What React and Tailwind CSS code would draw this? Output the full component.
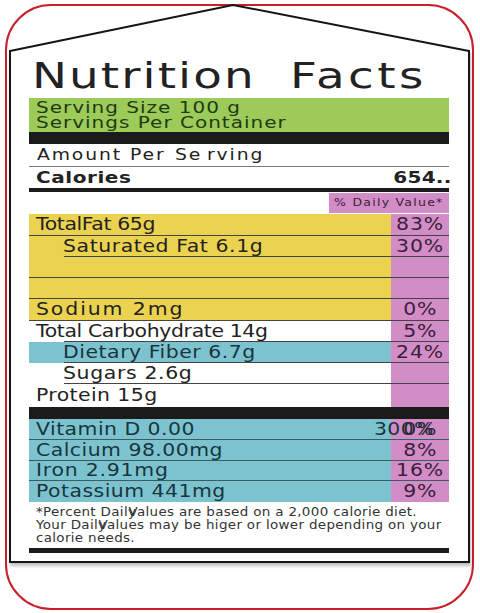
const YELLOW = 'bg-[#ebd250]';
const BLUE = 'bg-[#7dc3cf]';
const WHITE = 'bg-white';
const PINK = 'bg-[#d28cc6]';

const upperRows = [
  { label: 'TotalFat 65g', value: '83%', bg: YELLOW, h: 'h-[22px]', track: 'tracking-[-0.3px]', indent: false, line: 'full' },
  { label: 'Saturated Fat 6.1g', value: '30%', bg: YELLOW, h: 'h-[21px]', track: 'tracking-[0.5px]', indent: true, line: 'indent' },
  { label: '', value: '', bg: YELLOW, h: 'h-[21px]', track: '', indent: false, line: 'full' },
  { label: '', value: '', bg: YELLOW, h: 'h-[21px]', track: '', indent: false, line: 'full' },
  { label: 'Sodium 2mg', value: '0%', bg: YELLOW, h: 'h-[22px]', track: 'tracking-[1.6px]', indent: false, line: 'full' },
  { label: 'Total Carbohydrate 14g', value: '5%', bg: WHITE, h: 'h-[21px]', track: 'tracking-[-0.3px]', indent: false, line: 'indent' },
  { label: 'Dietary Fiber 6.7g', value: '24%', bg: BLUE, h: 'h-[21px]', track: 'tracking-[0.45px]', indent: true, line: 'indent' },
  { label: 'Sugars 2.6g', value: '', bg: WHITE, h: 'h-[21px]', track: 'tracking-[0.55px]', indent: true, line: 'indent' },
  { label: 'Protein 15g', value: '', bg: WHITE, h: 'h-[23px]', track: 'tracking-[0.35px]', indent: false, line: 'none' },
];

const lowerRows = [
  { label: 'Vitamin D 0.00', value: '0%', h: 'h-[21px]', track: 'tracking-[0.4px]', line: true, extra: true },
  { label: 'Calcium 98.00mg', value: '8%', h: 'h-[21px]', track: 'tracking-[0.4px]', line: true },
  { label: 'Iron 2.91mg', value: '16%', h: 'h-[20px]', track: 'tracking-[0.65px]', line: true },
  { label: 'Potassium 441mg', value: '9%', h: 'h-[21px]', track: 'tracking-[0.4px]', line: false },
];

// the label artwork is stretched sideways, so text is widened with scale-x
function Wide({ className = '', children }) {
  return <span className={`inline-block whitespace-nowrap ${className}`}>{children}</span>;
}

function Row({ row }) {
  const textColor = row.bg === BLUE ? 'text-[#17363c]' : 'text-[#222]';
  return (
    <div className={`flex ${row.h} leading-[19px]`}>
      <div className={`w-[362px] flex flex-col ${row.bg}`}>
        <div className={`flex-1 min-h-0 flex items-center ${row.indent ? 'pl-[34px]' : 'pl-[7px]'}`}>
          <Wide className={`origin-left scale-x-[1.2] text-[17px] ${row.track} ${textColor}`}>{row.label}</Wide>
        </div>
        {row.line === 'full' && <div className="h-px shrink-0 bg-[#444]" />}
        {row.line === 'indent' && <div className="h-px shrink-0 ml-[35px] bg-[#444]" />}
      </div>
      <div className={`w-[58px] flex flex-col ${PINK}`}>
        <div className="flex-1 min-h-0 flex items-center justify-center">
          <Wide className="origin-center scale-x-[1.2] text-[17px] tracking-[0.8px] text-[#3a1f3a]">{row.value}</Wide>
        </div>
        {row.line !== 'none' && <div className="h-px shrink-0 bg-[#444]" />}
      </div>
    </div>
  );
}

export default function App() {
  return (
    <div className="relative w-[480px] h-[613px] bg-white pt-[4px] pl-[5px] font-['DejaVu_Sans',sans-serif] overflow-hidden">
      {/* red frame */}
      <div className="w-[469px] h-[606px] border-2 border-[#c8202a] rounded-[46px] pt-[44px] pl-[2px]">
        {/* label */}
        <div className="w-[461px] border-x-2 border-b-2 border-[#151515] pl-[18px] pr-[19px] pb-[8px] bg-white shadow-[1px_3px_3px_rgba(0,0,0,0.25)]">
          <div className="h-[48px] pt-[5px] pl-[2.5px] flex text-[36px] leading-[42px] text-[#222]">
            <Wide className="origin-left scale-x-[1.3] tracking-[1.6px]">Nutrition</Wide>
            <Wide className="ml-[86px] origin-left scale-x-[1.3] tracking-[2.6px]">Facts</Wide>
          </div>

          <div className="h-[34px] bg-[#9ccb5a] pt-[2px] pl-[7px] text-[16px] leading-[15px] tracking-[0.8px] text-[#213a10]">
            <div><Wide className="origin-left scale-x-[1.25]">Serving Size 100 g</Wide></div>
            <div><Wide className="origin-left scale-x-[1.25]">Servings Per Container</Wide></div>
          </div>
          <div className="h-[12px] bg-[#1b1b1b]" />

          <div className="h-[23px] flex items-center pl-[7.5px] border-b border-[#777] text-[15px] leading-[18px] tracking-[1.5px] text-[#222]">
            <Wide className="origin-left scale-x-[1.25]">Amount</Wide>
            <Wide className="ml-[26px] origin-left scale-x-[1.25]">Per</Wide>
            <Wide className="ml-[16px] origin-left scale-x-[1.25]">Se</Wide>
            <Wide className="ml-[10.5px] origin-left scale-x-[1.25]">rving</Wide>
          </div>
          <div className="h-[21px] flex items-center justify-between pl-[7px] font-bold text-[16px] leading-[19px] text-[#222]">
            <Wide className="origin-left scale-x-[1.25] tracking-[0.45px]">Calories</Wide>
            <Wide className="-mr-[3px] origin-right scale-x-[1.25] tracking-[0.2px]">654..</Wide>
          </div>
          <div className="h-[4px] bg-[#1b1b1b]" />

          <div className="h-[22px] pt-[1px] flex justify-end">
            <div className={`w-[120px] h-[20px] ${PINK} flex items-center justify-center text-[10px] leading-[12px] tracking-[1px] text-[#3a1f3a]`}>
              <Wide className="origin-center scale-x-[1.25]">% Daily Value*</Wide>
            </div>
          </div>

          {upperRows.map((row, i) => (
            <Row key={i} row={row} />
          ))}

          <div className="h-[12px] bg-[#1b1b1b]" />

          {lowerRows.map((row, i) => (
            <div key={i} className={`flex ${row.h} leading-[19px] ${row.line ? 'border-b border-[#3c5c62]' : ''}`}>
              <div className={`relative w-[362px] ${BLUE} flex items-center pl-[7px]`}>
                <Wide className={`origin-left scale-x-[1.2] text-[17px] text-[#17363c] ${row.track}`}>{row.label}</Wide>
                {row.extra && (
                  <span className="absolute left-[345px] inline-block origin-left scale-x-[1.2] text-[17px] tracking-[0.3px] text-[#17363c] whitespace-nowrap">300%</span>
                )}
              </div>
              <div className={`w-[58px] ${PINK} flex items-center justify-center`}>
                <Wide className="origin-center scale-x-[1.2] text-[17px] tracking-[0.8px] text-[#3a1f3a]">{row.value}</Wide>
              </div>
            </div>
          ))}

          <div className="pt-[4px] pl-[7px] text-[12px] leading-[13px] tracking-[0.3px] text-[#333]">
            <div><Wide className="origin-left scale-x-[1.12]">*Percent Daily<span className="-ml-[7px]">Values are based on a 2,000 calorie diet.</span></Wide></div>
            <div><Wide className="origin-left scale-x-[1.12]">Your Daily<span className="-ml-[7px]">Values may be higer or lower depending on your</span></Wide></div>
            <div><Wide className="origin-left scale-x-[1.12]">calorie needs.</Wide></div>
          </div>
          <div className="mt-[3px] h-[5px] bg-[#1b1b1b]" />
        </div>
      </div>

      {/* roof */}
      <svg className="absolute left-0 top-0 pointer-events-none" width="480" height="613">
        <polyline points="10,51 233,5 469,51" fill="none" stroke="#151515" strokeWidth="2" />
      </svg>
    </div>
  );
}
